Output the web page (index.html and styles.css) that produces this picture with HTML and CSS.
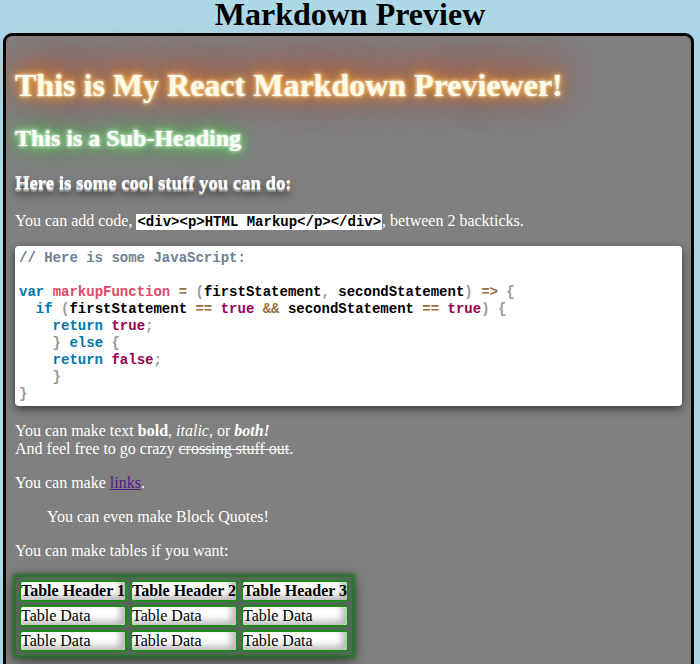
FILE: index.html
```html
<!DOCTYPE html>
<html>
<head>
<meta charset="utf-8">
<title>Markdown Preview</title>
<link rel="stylesheet" href="styles.css">
</head>
<body>
<h1 class="title">Markdown Preview</h1>
<div class="preview">
  <h1 class="glow-h1">This is My React Markdown Previewer!</h1>
  <h2 class="glow-h2">This is a Sub-Heading</h2>
  <h3 class="deep-h3">Here is some cool stuff you can do:</h3>
  <p>You can add code, <code class="inline">&lt;div&gt;&lt;p&gt;HTML Markup&lt;/p&gt;&lt;/div&gt;</code>, between 2 backticks.</p>
<pre class="block"><code><span class="t-c">// Here is some JavaScript:</span>

<span class="t-k">var</span> <span class="t-f">markupFunction</span> <span class="t-o">=</span> <span class="t-p">(</span>firstStatement<span class="t-p">,</span> secondStatement<span class="t-p">)</span> <span class="t-o">=&gt;</span> <span class="t-p">{</span>
  <span class="t-k">if</span> <span class="t-p">(</span>firstStatement <span class="t-o">==</span> <span class="t-b">true</span> <span class="t-o">&amp;&amp;</span> secondStatement <span class="t-o">==</span> <span class="t-b">true</span><span class="t-p">)</span> <span class="t-p">{</span>
    <span class="t-k">return</span> <span class="t-b">true</span><span class="t-p">;</span>
    <span class="t-p">}</span> <span class="t-k">else</span> <span class="t-p">{</span>
    <span class="t-k">return</span> <span class="t-b">false</span><span class="t-p">;</span>
    <span class="t-p">}</span>
<span class="t-p">}</span></code></pre>
  <p>You can make text <strong>bold</strong>, <em>italic</em>, or <strong><em>both!</em></strong><br>And feel free to go crazy <del>crossing stuff out</del>.</p>
  <p>You can make <a class="link" href="#">links</a>.</p>
  <blockquote class="quote">You can even make Block Quotes!</blockquote>
  <p>You can make tables if you want:</p>
  <table class="md-table">
    <tr><th>Table Header 1</th><th>Table Header 2</th><th>Table Header 3</th></tr>
    <tr><td>Table Data</td><td>Table Data</td><td>Table Data</td></tr>
    <tr><td>Table Data</td><td>Table Data</td><td>Table Data</td></tr>
  </table>
  <p>&nbsp;</p>
</div>
</body>
</html>
```
FILE: styles.css
```css
html, body {
  margin: 0;
  padding: 0;
}
body {
  background: #add8e6;
  font-family: "Liberation Serif", "Times New Roman", serif;
  font-size: 16px;
  color: #000;
}
.title {
  margin: 0 0 5px 0;
  font-size: 32px;
  line-height: 28px;
  text-align: center;
  font-weight: bold;
}
.preview {
  margin: 0 6px 0 3px;
  border: 3px solid #000;
  border-radius: 9px;
  background: #808080;
  color: #fff;
  padding: 10px 9px;
}
.glow-h1 {
  margin: 21px 0 21px;
  font-size: 32px;
  color: #fffbe6;
  text-shadow: 0 0 3px #fff, 0 0 7px #ffc040, 0 0 14px #ff9020, 0 -6px 30px #ff5000, 0 -10px 50px #d03000;
}
.glow-h2 {
  margin: 18px 0 20px;
  font-size: 24px;
  color: #fff;
  text-shadow: 0 0 3px #fff, 0 0 7px #b0ffb0, 0 0 14px #50e050, 0 0 25px #30c030;
}
.deep-h3 {
  margin: 18px 0;
  font-size: 18.72px;
  color: #fff;
  text-shadow: 0 1px 0 #ccc, 0 2px 0 #aaa, 0 3px 0 #888, 0 4px 0 #666, 0 5px 6px rgba(0,0,0,.45), 0 6px 12px rgba(0,0,0,.35);
}
p {
  margin: 16px 0;
}
.inline {
  background: #fff;
  color: #000;
  font-family: "Liberation Mono", "Courier New", monospace;
  font-weight: bold;
  font-size: 14px;
  padding: 0 1px;
}
.block {
  margin: 16px 0;
  background: #fff;
  color: #000;
  border-radius: 4px;
  padding: 4px 4px 3px;
  box-shadow: 0 3px 10px rgba(0,0,0,.55);
  font-family: "Liberation Mono", "Courier New", monospace;
  font-weight: bold;
  font-size: 14px;
  line-height: 17px;
}
.block code {
  font-family: inherit;
}
.t-c { color: #708090; }
.t-k { color: #0077aa; }
.t-f { color: #dd4a68; }
.t-o { color: #9a6e3a; }
.t-p { color: #999; }
.t-b { color: #990055; }
.link {
  color: #551a8b;
}
.quote {
  margin: 16px 32px;
}
.md-table {
  border: 1px solid #1f7a1f;
  border-spacing: 3px;
  background: #56655a;
  box-shadow: 0 0 4px 2px #2a6a2a, 0 4px 14px rgba(0,0,0,.6);
}
.md-table th,
.md-table td {
  border: 2px solid #1e8a1e;
  border-radius: 4px;
  background: #fff;
  color: #000;
  padding: 0;
  text-align: left;
  box-shadow: inset -5px -4px 7px rgba(0,0,0,.28);
}
.md-table th {
  text-align: center;
}
```
